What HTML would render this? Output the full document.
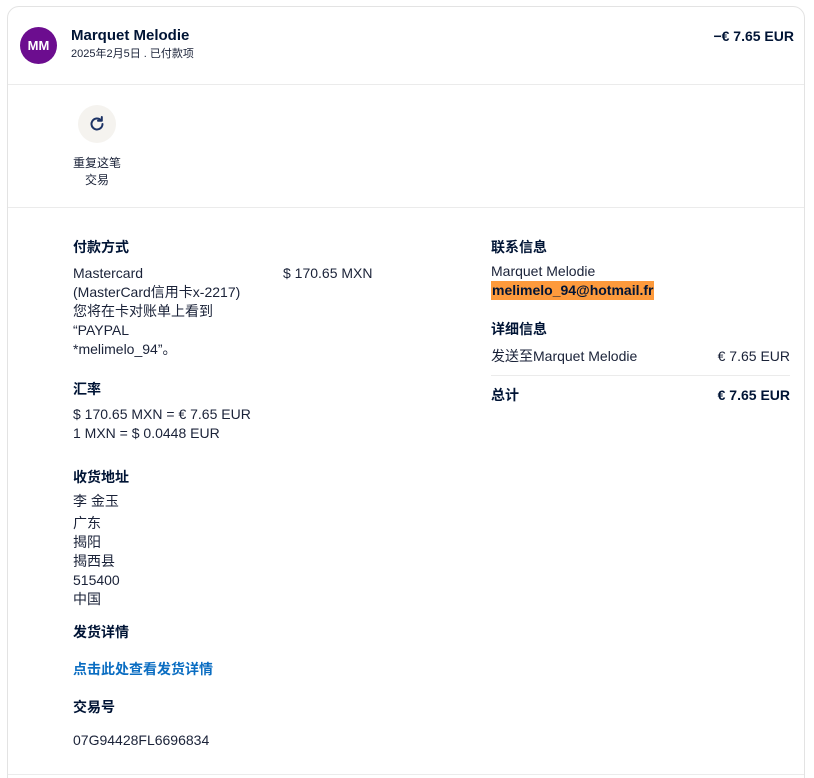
<!DOCTYPE html>
<html style="height:778px;overflow:hidden"><head><meta charset="utf-8"><style>
*{margin:0;padding:0;box-sizing:border-box}
body{width:814px;height:778px;background:#fff;font-family:"Liberation Sans","Noto Sans CJK SC",sans-serif;color:#001435;overflow:hidden;position:relative}
.card{position:absolute;left:7px;top:6px;width:798px;height:790px;border:1px solid #e3e3e3;border-radius:12px}
.a{position:absolute;white-space:nowrap;font-size:14px;line-height:19px;color:#1a2238}
.b{font-weight:bold;color:#001435}
.hr{position:absolute;height:1px;background:#ebebeb}
</style></head><body>
<div class="card"></div>
<div style="position:absolute;left:20px;top:27px;width:37px;height:37px;border-radius:50%;background:#6c0d8f;color:#fff;font-weight:bold;font-size:13px;line-height:37px;text-align:center">MM</div>
<div class="a b" style="left:71px;top:26px;font-size:15px">Marquet Melodie</div>
<div class="a" style="left:71px;top:45px;font-size:11px">2025年2月5日 . 已付款项</div>
<div class="a b" style="right:20px;top:27px;font-size:14px">−€ 7.65 EUR</div>
<div class="hr" style="left:8px;top:84px;width:796px"></div>
<div style="position:absolute;left:78px;top:105px;width:38px;height:38px;border-radius:50%;background:#f5f3ef"></div>
<svg style="position:absolute;left:87px;top:114px" width="20" height="20" viewBox="0 0 20 20"><path d="M15.5 10a5.5 5.5 0 1 1-1.6-3.9" fill="none" stroke="#1d3365" stroke-width="2" stroke-linecap="round"/><path d="M14.8 3v3.8H11" fill="none" stroke="#1d3365" stroke-width="2" stroke-linecap="round" stroke-linejoin="round"/></svg>
<div class="a" style="left:72px;top:155px;font-size:12px;line-height:17px;text-align:center;width:50px">重复这笔<br>交易</div>
<div class="hr" style="left:8px;top:207px;width:796px"></div>

<div class="a b" style="left:73px;top:238px">付款方式</div>
<div class="a" style="left:73px;top:264px">Mastercard<br>(MasterCard信用卡x-2217)<br>您将在卡对账单上看到<br>“PAYPAL<br>*melimelo_94”。</div>
<div class="a" style="left:283px;top:264px">$ 170.65 MXN</div>
<div class="a b" style="left:73px;top:380px">汇率</div>
<div class="a" style="left:73px;top:405px">$ 170.65 MXN = € 7.65 EUR<br>1 MXN = $ 0.0448 EUR</div>
<div class="a b" style="left:73px;top:468px">收货地址</div>
<div class="a" style="left:73px;top:492px">李 金玉</div>
<div class="a" style="left:73px;top:514px">广东<br>揭阳<br>揭西县<br>515400<br>中国</div>
<div class="a b" style="left:73px;top:623px">发货详情</div>
<div class="a b" style="left:73px;top:660px;color:#0a6dc2">点击此处查看发货详情</div>
<div class="a b" style="left:73px;top:698px">交易号</div>
<div class="a" style="left:73px;top:731px">07G94428FL6696834</div>

<div class="a b" style="left:491px;top:238px">联系信息</div>
<div class="a" style="left:491px;top:262px">Marquet Melodie</div>
<div class="a b" style="left:491px;top:281px;background:#fd9a3c;padding:0 1px">melimelo_94@hotmail.fr</div>
<div class="a b" style="left:491px;top:320px">详细信息</div>
<div class="a" style="left:491px;top:347px">发送至Marquet Melodie</div>
<div class="a" style="right:24px;top:347px">€ 7.65 EUR</div>
<div class="hr" style="left:491px;top:375px;width:299px"></div>
<div class="a b" style="left:491px;top:386px">总计</div>
<div class="a b" style="right:24px;top:386px">€ 7.65 EUR</div>
<div class="hr" style="left:8px;top:774px;width:796px"></div>
</body></html>
